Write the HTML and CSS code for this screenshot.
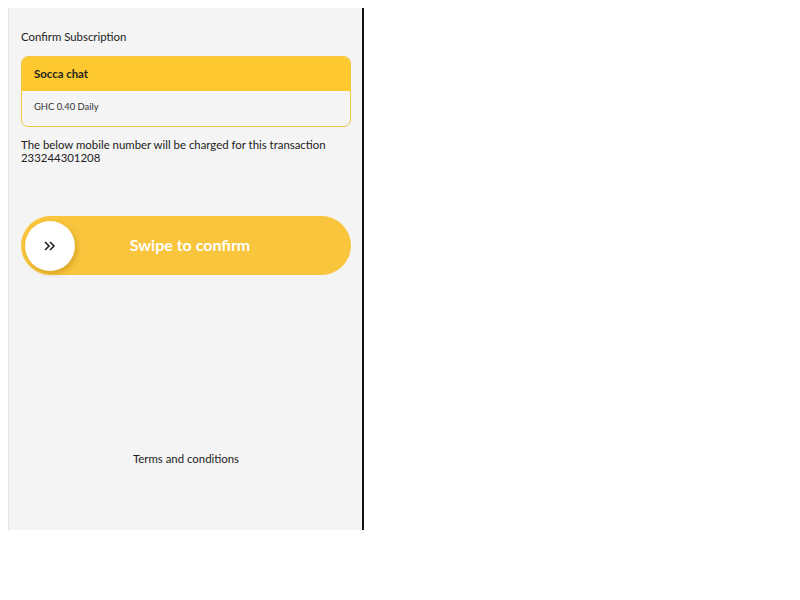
FILE: index.html
```html
<!DOCTYPE html>
<html lang="en">
<head>
    <meta charset="UTF-8">
    <meta name="viewport" content="width=device-width, initial-scale=1.0">
    <title>Confirm Subscription</title>
    <link rel="stylesheet" href="styles.css">
</head>
<body>
    <div class="screen">
        <div class="title">Confirm Subscription</div>

        <div class="plan-card">
            <div class="plan-name">Socca chat</div>
            <div class="plan-price">GHC 0.40 Daily</div>
        </div>

        <p class="notice">The below mobile number will be charged for this transaction<br>233244301208</p>

        <div class="swipe">
            <div class="swipe-knob">
                <svg width="14" height="12" viewBox="0 0 14 12">
                    <path d="M2 2l4 4-4 4M7 2l4 4-4 4" fill="none" stroke="#222" stroke-width="1.6"/>
                </svg>
            </div>
            <div class="swipe-label">Swipe to confirm</div>
        </div>

        <div class="terms">Terms and conditions</div>
    </div>
</body>
</html>
```

FILE: styles.css
```css
body {
    font-family: Lato, "Liberation Sans", sans-serif;
    background-color: #ffffff;
    color: #222222;
    margin: 8px;
}
.screen {
    box-sizing: border-box;
    width: 356px;
    height: 522px;
    background-color: #f4f4f4;
    border-left: 1px solid #e2e2e2;
    border-right: 2px solid #111111;
    padding: 0 11px 0 12px;
    display: flex;
    flex-direction: column;
}
.title {
    font-size: 11.4px;
    margin-top: 22px;
    line-height: 13px;
}
.plan-card {
    margin-top: 13px;
    border: 1px solid #f3c544;
    border-radius: 7px;
    overflow: hidden;
}
.plan-name {
    background-color: #fec92e;
    font-size: 11.4px;
    font-weight: bold;
    padding: 0 12px;
    height: 34px;
    line-height: 33px;
}
.plan-price {
    font-size: 9.4px;
    padding: 0 12px;
    height: 35px;
    line-height: 32px;
    color: #333333;
}
.notice {
    font-size: 11.4px;
    line-height: 13px;
    margin: 11px 0 0;
}
.swipe {
    margin-top: 52px;
    height: 59px;
    border-radius: 30px;
    background-color: #f8c53c;
    display: flex;
    align-items: center;
    padding-left: 4px;
}
.swipe-knob {
    width: 50px;
    height: 50px;
    border-radius: 50%;
    background-color: #ffffff;
    box-shadow: 2px 3px 5px rgba(160, 110, 0, 0.35);
    display: flex;
    align-items: center;
    justify-content: center;
}
.swipe-label {
    flex: 1;
    text-align: center;
    color: #ffffff;
    font-size: 16px;
    font-weight: bold;
    padding-right: 46px;
    margin-top: -2px;
}
.terms {
    margin-top: 177px;
    text-align: center;
    font-size: 11.4px;
}
```
